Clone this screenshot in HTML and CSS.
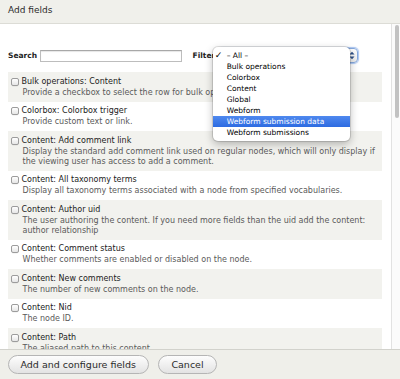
FILE: index.html
```html
<!DOCTYPE html>
<html>
<head>
<meta charset="utf-8">
<title>Add fields</title>
<link rel="stylesheet" href="styles.css">
</head>
<body>
<div class="dialog">
  <div class="titlebar">Add fields</div>
  <div class="pane">
    <div class="content">
      <div class="filters">
        <label class="lbl">Search</label>
        <input class="search-input" type="text">
        <label class="lbl lbl-filter">Filter</label>
        <div class="select">
          <span class="select-value">– All –</span>
          <svg class="select-arrows" width="6" height="9" viewBox="0 0 6 9"><path d="M0.5 3.5 L3 0.8 L5.5 3.5 Z M0.5 5.5 L3 8.2 L5.5 5.5 Z" fill="#2d4f86"/></svg>
          <div class="menu">
            <div class="menu-item"><span class="check">✓</span><span>– All –</span></div>
            <div class="menu-item"><span class="check"></span><span>Bulk operations</span></div>
            <div class="menu-item"><span class="check"></span><span>Colorbox</span></div>
            <div class="menu-item"><span class="check"></span><span>Content</span></div>
            <div class="menu-item"><span class="check"></span><span>Global</span></div>
            <div class="menu-item"><span class="check"></span><span>Webform</span></div>
            <div class="menu-item active"><span class="check"></span><span>Webform submission data</span></div>
            <div class="menu-item"><span class="check"></span><span>Webform submissions</span></div>
          </div>
        </div>
      </div>
      <div class="fields">
        <div class="field"><label class="field-title"><input type="checkbox">Bulk operations: Content</label><div class="field-desc">Provide a checkbox to select the row for bulk operations.</div></div>
        <div class="field"><label class="field-title"><input type="checkbox">Colorbox: Colorbox trigger</label><div class="field-desc">Provide custom text or link.</div></div>
        <div class="field"><label class="field-title"><input type="checkbox">Content: Add comment link</label><div class="field-desc">Display the standard add comment link used on regular nodes, which will only display if the viewing user has access to add a comment.</div></div>
        <div class="field"><label class="field-title"><input type="checkbox">Content: All taxonomy terms</label><div class="field-desc">Display all taxonomy terms associated with a node from specified vocabularies.</div></div>
        <div class="field"><label class="field-title"><input type="checkbox">Content: Author uid</label><div class="field-desc">The user authoring the content. If you need more fields than the uid add the content: author relationship</div></div>
        <div class="field"><label class="field-title"><input type="checkbox">Content: Comment status</label><div class="field-desc">Whether comments are enabled or disabled on the node.</div></div>
        <div class="field"><label class="field-title"><input type="checkbox">Content: New comments</label><div class="field-desc">The number of new comments on the node.</div></div>
        <div class="field"><label class="field-title"><input type="checkbox">Content: Nid</label><div class="field-desc">The node ID.</div></div>
        <div class="field"><label class="field-title"><input type="checkbox">Content: Path</label><div class="field-desc">The aliased path to this content.</div></div>
      </div>
    </div>
    <div class="scrollbar"><div class="thumb"></div></div>
  </div>
  <div class="actions">
    <button class="btn" type="button">Add and configure fields</button>
    <button class="btn" type="button">Cancel</button>
  </div>
</div>
</body>
</html>
```

FILE: styles.css
```css
html, body {
  margin: 0;
  padding: 0;
  background: #fff;
}

body {
  font-family: "DejaVu Sans", "Liberation Sans", sans-serif;
  color: #2b2b2b;
}

.dialog {
  width: 400px;
  height: 379px;
  display: flex;
  flex-direction: column;
  overflow: hidden;
}

.titlebar {
  flex: none;
  height: 21px;
  line-height: 21px;
  padding: 0 8px 2px;
  font-size: 9px;
  color: #2b2b2b;
  background: #f0f0eb;
  border-bottom: 1px solid #dcdcd6;
}

.pane {
  flex: 1;
  min-height: 0;
  display: flex;
  background: #fff;
}

.content {
  flex: 1;
  min-width: 0;
  overflow: hidden;
  padding: 24px 9px 0 8px;
}

.scrollbar {
  flex: none;
  width: 4px;
  padding: 1px 1px 0 3px;
  background: #fbfbfb;
  border-left: 1px solid #e2e2e2;
}

.thumb {
  height: 93px;
  border-radius: 2px;
  background: #c2c2c2;
}

.filters {
  display: flex;
  align-items: center;
  height: 15px;
  margin-bottom: 9px;
}

.lbl {
  font-weight: bold;
  font-size: 7.5px;
  color: #222;
}

.search-input {
  width: 142px;
  height: 12px;
  box-sizing: border-box;
  margin: 0 0 0 3px;
  padding: 0 2px;
  border: 1px solid #bdbdbd;
  border-top-color: #a8a8a8;
  box-shadow: inset 0 1px 1px rgba(0, 0, 0, 0.1);
  background: #fff;
  outline: none;
}

.lbl-filter {
  margin-left: 10.5px;
}

.select {
  position: relative;
  width: 139px;
  height: 15px;
  box-sizing: border-box;
  margin-left: 3.5px;
  border: 1px solid #86a9dd;
  border-radius: 4px;
  box-shadow: 0 0 1px 1px rgba(100, 150, 230, 0.55);
  background: linear-gradient(#ffffff, #ececec);
  display: flex;
  align-items: center;
  justify-content: space-between;
  padding: 0 2px 0 6px;
  font-size: 7.5px;
}

.select-arrows {
  display: block;
}

.menu {
  position: absolute;
  left: -7px;
  top: -2px;
  width: 137px;
  padding: 2.5px 0 3px;
  background: #fff;
  border-radius: 5px;
  box-shadow: 0 3px 8px rgba(0, 0, 0, 0.28), 0 0 0 1px rgba(0, 0, 0, 0.12);
  z-index: 5;
}

.menu-item {
  display: flex;
  height: 11px;
  line-height: 11px;
  font-size: 7.5px;
  color: #000;
}

.menu-item .check {
  width: 14px;
  box-sizing: border-box;
  padding-left: 2px;
  font-size: 9px;
  font-weight: bold;
  color: #000;
}

.menu-item.active {
  background: linear-gradient(#4f89ef, #2d6be1);
  color: #fff;
}

.fields {
  display: flex;
  flex-direction: column;
}

.field {
  padding: 3.5px 2.5px 4px;
}

.field:nth-child(odd) {
  background: #f2f2ee;
}

.field-title {
  display: flex;
  align-items: center;
  height: 12px;
  line-height: 12px;
  font-size: 8px;
  color: #222;
}

.field-title input {
  -webkit-appearance: none;
  appearance: none;
  width: 8px;
  height: 8px;
  margin: 0 3px 0 0;
  box-sizing: border-box;
  border: 1px solid #9c9c9c;
  border-radius: 2px;
  background: linear-gradient(#ffffff, #e6e6e6);
  box-shadow: 0 0.5px 0 rgba(0, 0, 0, 0.08);
  flex: none;
}

.field-desc {
  padding-left: 12px;
  font-size: 8px;
  line-height: 10px;
  color: #5a5a5a;
}

.actions {
  flex: none;
  height: 29px;
  border-top: 1px solid #d2d2cc;
  background: #efefea;
  display: flex;
  align-items: center;
  gap: 9.5px;
  padding-left: 7.5px;
}

.btn {
  height: 19px;
  padding: 0 12px;
  border: 1px solid #b5b5b5;
  border-radius: 10px;
  background: linear-gradient(#fdfdfd, #e3e3e3);
  font-family: "DejaVu Sans", "Liberation Sans", sans-serif;
  font-size: 9.5px;
  color: #2b2b2b;
  display: inline-flex;
  align-items: center;
  line-height: 1.2;
}
```
